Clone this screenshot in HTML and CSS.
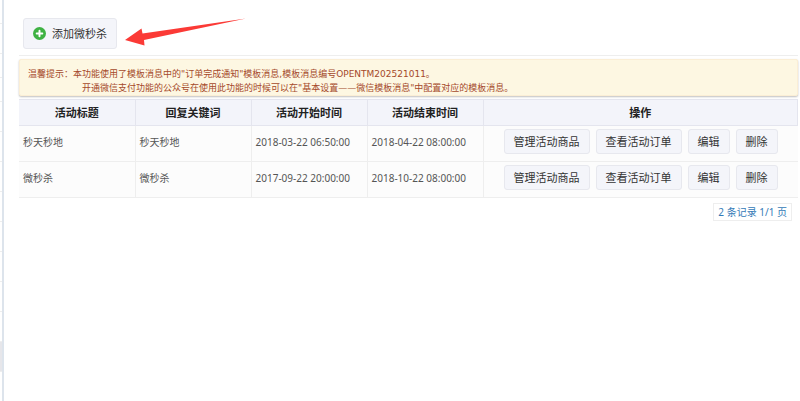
FILE: index.html
```html
<!DOCTYPE html>
<html lang="zh-CN">
<head>
    <meta charset="UTF-8">
    <meta name="viewport" content="width=device-width, initial-scale=1.0">
    <title>微秒杀</title>
    <link rel="stylesheet" href="styles.css">
</head>
<body>

    <div class="page">
        <aside class="sidebar">
            <div class="menu-item menu-short"></div>
            <div class="menu-item"></div>
            <div class="menu-item menu-short"></div>
            <div class="menu-item menu-short"></div>
            <div class="menu-item"></div>
            <div class="menu-item"></div>
            <div class="menu-item"></div>
            <div class="menu-item"></div>
            <div class="menu-item"></div>
            <div class="menu-item"></div>
            <div class="menu-item"></div>
            <div class="menu-item"></div>
            <div class="menu-item active"></div>
        </aside>

        <main class="content">
            <div class="toolbar">
                <button type="button" class="btn btn-add">
                    <svg class="icon-add" viewBox="0 0 12 12" aria-hidden="true">
                        <circle cx="6" cy="6" r="6" fill="#3eb243"/>
                        <path d="M6 3.400v5.200M3.400 6h5.200" stroke="#fff" stroke-width="1.800" stroke-linecap="round"/>
                    </svg>
                    添加微秒杀
                </button>
                <svg class="arrow" viewBox="0 0 122 29" aria-hidden="true">
                    <path d="M0 22L16.500 10.500L17.500 15.500L121 0.500L19 22L19.500 27.500Z" fill="#fb3a36"/>
                </svg>
            </div>

            <div class="notice">
                <p>温馨提示：本功能使用了模板消息中的"订单完成通知"模板消息,模板消息编号OPENTM202521011。</p>
                <p class="indent">开通微信支付功能的公众号在使用此功能的时候可以在"基本设置——微信模板消息"中配置对应的模板消息。</p>
            </div>

            <table class="list">
                <thead>
                    <tr>
                        <th>活动标题</th>
                        <th>回复关键词</th>
                        <th>活动开始时间</th>
                        <th>活动结束时间</th>
                        <th class="col-action">操作</th>
                    </tr>
                </thead>
                <tbody>
                    <tr>
                        <td>秒天秒地</td>
                        <td>秒天秒地</td>
                        <td>2018-03-22 06:50:00</td>
                        <td>2018-04-22 08:00:00</td>
                        <td class="action">
                            <div class="btn-group">
                                <button type="button" class="btn">管理活动商品</button>
                                <button type="button" class="btn">查看活动订单</button>
                                <button type="button" class="btn">编辑</button>
                                <button type="button" class="btn">删除</button>
                            </div>
                        </td>
                    </tr>
                    <tr>
                        <td>微秒杀</td>
                        <td>微秒杀</td>
                        <td>2017-09-22 20:00:00</td>
                        <td>2018-10-22 08:00:00</td>
                        <td class="action">
                            <div class="btn-group">
                                <button type="button" class="btn">管理活动商品</button>
                                <button type="button" class="btn">查看活动订单</button>
                                <button type="button" class="btn">编辑</button>
                                <button type="button" class="btn">删除</button>
                            </div>
                        </td>
                    </tr>
                </tbody>
            </table>

            <div class="pager">
                <span class="pager-info">2 条记录 1/1 页</span>
            </div>
        </main>
    </div>

</body>
</html>
```

FILE: styles.css
```css
* {
    box-sizing: border-box;
}
body {
    margin: 0;
    background: #fff;
    color: #555;
    font-family: "Noto Sans", "Noto Sans CJK SC", sans-serif;
    font-size: 10px;
    line-height: 14px;
}
p {
    margin: 0;
}
.page {
    display: flex;
    min-height: 100vh;
}
.sidebar {
    width: 4px;
    border-right: 2px solid #dde4ec;
}
.menu-item {
    height: 30px;
    border-bottom: 1px solid #eee;
}
.menu-short {
    height: 24px;
}
.menu-item.active {
    background: #e6e6ea;
}
.content {
    flex: 1;
    padding: 18px 2px 0 15px;
}
.toolbar {
    position: relative;
    padding: 0 4px 6px;
    border-bottom: 1px solid #eee;
}
.btn {
    height: 25px;
    padding: 0 9px;
    border: 1px solid #e7e8ee;
    border-radius: 3px;
    background: #f4f5fa;
    color: #333;
    font-family: inherit;
    font-size: 11px;
    line-height: 16px;
    cursor: pointer;
}
.btn:hover {
    background: #e9ebf3;
}
.btn-add {
    display: flex;
    align-items: center;
    gap: 6px;
    height: 31px;
}
.icon-add {
    width: 13px;
    height: 13px;
}
.arrow {
    position: absolute;
    left: 106px;
    top: 0;
    width: 122px;
    height: 29px;
}
.notice {
    margin-top: 3px;
    padding: 7px 8px 0;
    border: 1px solid #fbeed5;
    border-radius: 2px;
    background: #fdf7e2;
    box-shadow: 0 1px 2px rgba(0, 0, 0, 0.25);
    color: #a5492a;
    font-family: "DejaVu Sans", "Noto Sans CJK SC", sans-serif;
    font-size: 9px;
}
.notice .indent {
    padding-left: 54px;
}
.list {
    width: 100%;
    margin-top: 3px;
    border-collapse: collapse;
    table-layout: fixed;
}
.list th {
    width: 116px;
    height: 26px;
    padding: 0;
    border: 1px solid #e4e5ee;
    background: #f3f4fa;
    color: #222;
    font-size: 11px;
}
.list th:first-child {
    border-left: 0;
}
.list .col-action {
    width: auto;
}
.list td {
    height: 36px;
    padding: 0 4px 3px;
    border: 1px solid #eee;
    border-width: 0 0 1px 1px;
    background: #fcfcfc;
}
.list td:first-child {
    border-left: 0;
}
.list .action {
    padding: 3px 0 7px;
}
.btn-group {
    display: flex;
    justify-content: center;
    gap: 6px;
}
.pager {
    display: flex;
    justify-content: flex-end;
    padding: 5px 6px;
}
.pager-info {
    padding: 1px 4px;
    border: 1px solid #eee;
    color: #337ab7;
}
```
